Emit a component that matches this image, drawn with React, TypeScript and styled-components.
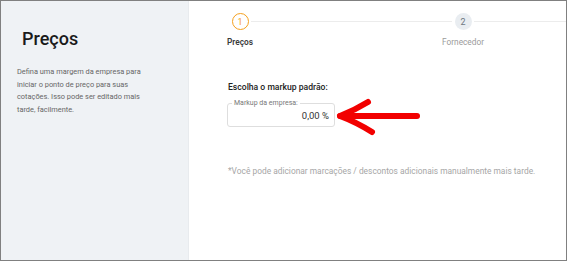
import React from 'react';
import styled, { createGlobalStyle } from 'styled-components';

const GlobalStyle = createGlobalStyle`
  * { box-sizing: border-box; }
  body {
    margin: 0;
    font-family: Roboto, "Liberation Sans", sans-serif;
    background: #fff;
  }
`

const Frame = styled.div`
  width: 567px;
  height: 261px;
  border: 1px solid #808080;
  display: flex;
  overflow: hidden;
  background: #fff;
`

const Sidebar = styled.aside`
  width: 188px;
  flex-shrink: 0;
  background: #eff2f5;
  border-right: 1px solid #e8ebee;
  padding: 27px 16px 0 16px;
`

const Title = styled.h1`
  margin: 0 0 16px 5px;
  font-size: 18px;
  line-height: 22px;
  font-weight: 500;
  color: #1a1a1a;
`

const Description = styled.p`
  margin: 0;
  width: 128px;
  font-size: 7.4px;
  line-height: 12.5px;
  color: #666;
`

const Main = styled.main`
  flex: 1;
  min-width: 0;
  padding: 12px 0 0 21px;
  overflow: hidden;
`

const Stepper = styled.div`
  display: flex;
`

const Step = styled.div`
  flex: 0 0 223px;
  display: flex;
  align-items: flex-start;
`

const Marker = styled.div`
  width: 60px;
  flex-shrink: 0;
  display: flex;
  flex-direction: column;
  align-items: center;
`

const Circle = styled.div<{ active: boolean }>`
  width: 17px;
  height: 17px;
  border-radius: 50%;
  display: flex;
  align-items: center;
  justify-content: center;
  font-size: 9px;
  font-weight: 400;
  color: ${({ active }) => active ? '#f5a01e' : '#6f7782'};
  background: ${({ active }) => active ? '#fff' : '#e9edf1'};
  border: ${({ active }) => active ? '1.6px solid #f5a01e' : 'none'};
`

const StepLabel = styled.span<{ active: boolean }>`
  margin-top: 7px;
  font-size: 8.3px;
  line-height: 11px;
  white-space: nowrap;
  font-weight: ${({ active }) => active ? 600 : 400};
  color: ${({ active }) => active ? '#3a3a3a' : '#9b9b9b'};
`

const Connector = styled.div`
  flex: 1;
  height: 1px;
  margin: 8px -18.5px 0 -19.5px;
  background: #ececec;
`

const Content = styled.section`
  margin: 33px 0 0 17px;
`

const FieldTitle = styled.h2`
  margin: 0 0 10px 1px;
  font-size: 8.6px;
  line-height: 12px;
  font-weight: 500;
  color: #222;
`

const FieldRow = styled.div`
  display: flex;
  align-items: flex-start;
`

const InputBox = styled.div`
  position: relative;
  width: 108px;
  height: 24px;
  border: 1px solid #dedede;
  border-radius: 3px;
  display: flex;
  align-items: center;
  justify-content: flex-end;
  padding-right: 5px;
`

const FloatLabel = styled.span`
  position: absolute;
  top: -5px;
  left: 4px;
  padding: 0 2px;
  background: #fff;
  font-size: 7px;
  line-height: 8px;
  color: #777;
`

const Value = styled.span`
  font-size: 9.5px;
  color: #333;
`

const Arrow = styled.svg`
  margin: -6px 0 0 0;
  flex-shrink: 0;
`

const Note = styled.p`
  margin: 28px 0 0 1px;
  font-size: 8.4px;
  line-height: 12px;
  color: #a6a6a6;
  white-space: nowrap;
`

const steps = ['Preços', 'Fornecedor'];

const App = () => {
  const current = 0;
  return (
    <>
      <GlobalStyle />
      <Frame>
        <Sidebar>
          <Title>Preços</Title>
          <Description>
            Defina uma margem da empresa para iniciar o ponto de preço para suas
            cotações. Isso pode ser editado mais tarde, facilmente.
          </Description>
        </Sidebar>
        <Main>
          <Stepper>
            {steps.map((s, idx) => (
              <Step key={'step' + idx}>
                <Marker>
                  <Circle active={idx === current}>{idx + 1}</Circle>
                  <StepLabel active={idx === current}>{s}</StepLabel>
                </Marker>
                <Connector />
              </Step>
            ))}
          </Stepper>
          <Content>
            <FieldTitle>Escolha o markup padrão:</FieldTitle>
            <FieldRow>
              <InputBox>
                <FloatLabel>Markup da empresa:</FloatLabel>
                <Value>0,00 %</Value>
              </InputBox>
              <Arrow width="86" height="40" viewBox="0 0 86 40">
                <g fill="none" stroke="#f20000" strokeWidth="6" strokeLinecap="round" strokeLinejoin="round">
                  <path d="M33 5 Q20 13 5 19 Q21 25 37 35" />
                  <path d="M5 19 L82 19" />
                </g>
              </Arrow>
            </FieldRow>
            <Note>*Você pode adicionar marcações / descontos adicionais manualmente mais tarde.</Note>
          </Content>
        </Main>
      </Frame>
    </>
  );
}

export default App;
